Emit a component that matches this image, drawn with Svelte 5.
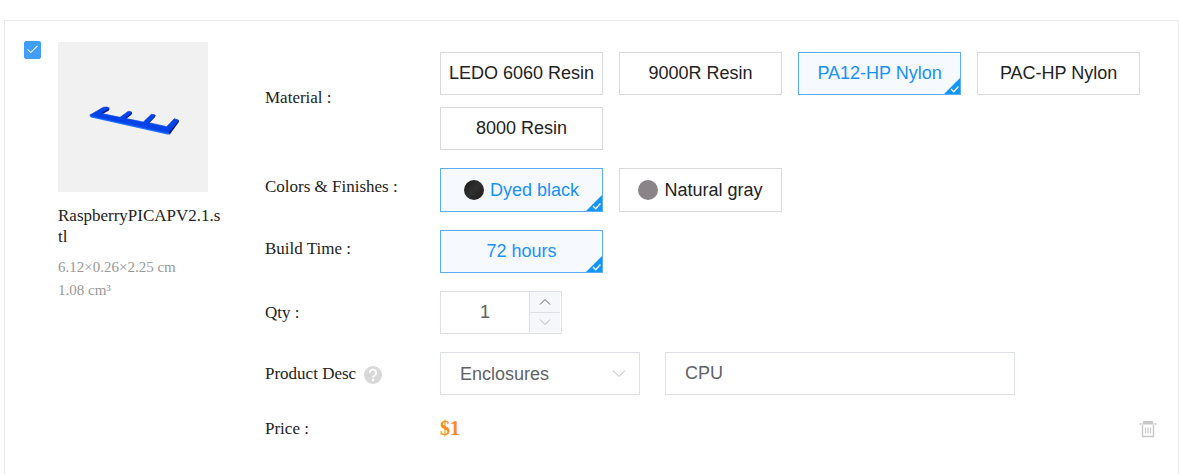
<script>
  const materials = [
    "LEDO 6060 Resin",
    "9000R Resin",
    "PA12-HP Nylon",
    "PAC-HP Nylon",
    "8000 Resin"
  ];
  const finishes = [
    { name: "Dyed black", swatch: "black" },
    { name: "Natural gray", swatch: "gray" }
  ];
  const buildTimes = ["72 hours"];
  const categories = ["Enclosures", "Prototypes", "Tools", "Other"];

  let selected = true;
  let material = "PA12-HP Nylon";
  let finish = "Dyed black";
  let buildTime = "72 hours";
  let qty = 1;
  let category = "Enclosures";
  let description = "CPU";

  function changeQty(step) {
    qty = Math.max(1, Number(qty) + step);
  }
</script>

<style>
  :global(body) {
    background: #fff;
  }

  .card {
    display: flex;
    align-items: flex-start;
    box-sizing: border-box;
    min-height: calc(100vh - 20px);
    margin: 20px 0 0 4px;
    padding: 20px 21px 24px 19px;
    border: 1px solid #ebebeb;
    border-bottom: 0;
    color: #222;
    font-family: "Liberation Serif", "Times New Roman", serif;
    font-size: 18px;
    line-height: 21px;
  }

  .pick {
    appearance: none;
    flex: none;
    display: grid;
    place-items: center;
    width: 17px;
    height: 18px;
    margin: 0;
    border: 1px solid #409eff;
    border-radius: 2px;
  }

  .pick:checked {
    background: #409eff;
  }

  .pick:checked::after {
    content: "";
    width: 4px;
    height: 9px;
    margin-top: -4px;
    border: solid #fff;
    border-width: 0 1px 1px 0;
    transform: rotate(45deg);
  }

  .part {
    flex: none;
    width: 165px;
    margin: 1px 42px 0 17px;
  }

  .thumb {
    display: block;
    width: 150px;
    height: 150px;
    margin-bottom: 13px;
    background: #f1f1f1;
  }

  .name {
    margin: 0 0 9px;
    font-size: 17px;
    word-break: break-all;
  }

  .size {
    margin: 0;
    color: #999;
    font-size: 15px;
    line-height: 23px;
  }

  .options {
    flex: 1;
    display: grid;
    gap: 18px;
    min-width: 0;
    padding-top: 11px;
  }

  .row {
    display: flex;
    align-items: center;
  }

  .label {
    flex: none;
    display: flex;
    align-items: center;
    width: 175px;
    font-size: 17px;
  }

  .choices .label {
    padding-bottom: 7px;
  }

  .values {
    flex: 1;
    display: flex;
    flex-wrap: wrap;
    gap: 12px 16px;
  }

  button,
  input,
  select {
    font-family: "Liberation Sans", Arial, sans-serif;
    font-size: 18px;
  }

  button {
    cursor: pointer;
  }

  .choice {
    position: relative;
    display: flex;
    justify-content: center;
    align-items: center;
    gap: 6px;
    min-width: 163px;
    height: 43px;
    padding: 0 8px;
    border: 1px solid #d9d9d9;
    background: #fff;
    color: #222;
  }

  .choice.finish {
    height: 44px;
  }

  .choice.active {
    border-color: #5babfb;
    background: #f6faff;
    color: #1890ff;
  }

  .corner {
    position: absolute;
    right: 0;
    bottom: 0;
    width: 16px;
    height: 16px;
  }

  .swatch {
    width: 20px;
    height: 20px;
    border-radius: 50%;
  }

  .black {
    background: linear-gradient(135deg, #191919, #303030 50%, #1c1c1c);
  }

  .gray {
    background: #8a8488;
  }

  .number,
  .select,
  .text {
    box-sizing: border-box;
    height: 43px;
    border: 1px solid #dcdfe6;
    background: #fff;
    color: #606266;
  }

  .number {
    display: flex;
    width: 122px;
  }

  .number input {
    flex: 1;
    min-width: 0;
    padding: 0;
    border: 0;
    background: none;
    color: inherit;
    text-align: center;
    outline: none;
  }

  .steps {
    display: flex;
    flex-direction: column;
    width: 30px;
    margin: 0 1px 1px 0;
    border-left: 1px solid #dcdfe6;
  }

  .steps button {
    flex: 1;
    display: grid;
    place-items: center;
    padding: 0;
    border: 0;
    background: #f5f7fa;
    color: #606266;
  }

  .steps button + button {
    border-top: 1px solid #dcdfe6;
  }

  .steps button:disabled {
    color: #b4b8c0;
    cursor: not-allowed;
  }

  .desc .values {
    gap: 12px 25px;
  }

  .select {
    display: grid;
    align-items: center;
    width: 200px;
  }

  .select select {
    grid-area: 1 / 1;
    appearance: none;
    height: 100%;
    padding: 0 40px 0 19px;
    border: 0;
    background: none;
    color: inherit;
    outline: none;
  }

  .select svg {
    grid-area: 1 / 1;
    justify-self: end;
    margin-right: 13px;
    color: #b4b8c0;
    pointer-events: none;
  }

  .text {
    flex: 0 1 350px;
    min-width: 0;
    padding: 0 19px;
    outline: none;
  }

  .help {
    margin: 3px 0 0 8px;
  }

  .price {
    flex: 1;
    color: #ff8a1e;
    font-size: 20px;
    font-weight: bold;
  }

  .total {
    padding-top: 5px;
  }

  .remove {
    display: block;
    padding: 0;
    border: 0;
    background: none;
  }

  .remove svg {
    display: block;
  }
</style>

{#snippet corner()}
  <svg class="corner" viewBox="0 0 16 16" aria-hidden="true">
    <path d="M16 0V16H0Z" fill="#1296fb" />
    <path d="M7 11l2.8 2.8 4.6-5.3" fill="none" stroke="#fff" stroke-width="1.3" />
  </svg>
{/snippet}

<div class="card">
  <input class="pick" type="checkbox" aria-label="Select part" bind:checked={selected} />

  <div class="part">
    <svg class="thumb" viewBox="0 0 450 450" aria-hidden="true">
      <g transform="translate(-174 -126)" fill="none" stroke-linecap="round" stroke-linejoin="round">
        <path
          d="M290 346L323 328M370 357L391 340M440 370L461 348M507 398L532 364"
          stroke="#06187f"
          stroke-width="10" />
        <path d="M275 348L503 399" stroke="#1670ff" stroke-width="9" />
        <path
          d="M270 345L310 322L320 321L328 324L302 340L360 352L385 334L396 337L375 355L430 366L454 343L466 346L446 368L500 380L523 356L536 361L506 397L498 397L272 347Z"
          fill="#0443e8"
          stroke="#0443e8"
          stroke-width="2" />
      </g>
    </svg>
    <p class="name">RaspberryPICAPV2.1.stl</p>
    <p class="size">6.12×0.26×2.25 cm</p>
    <p class="size">1.08 cm³</p>
  </div>

  <div class="options">
    <div class="row choices" role="group" aria-labelledby="material">
      <span class="label" id="material">Material :</span>
      <div class="values">
        {#each materials as item}
          <button
            class="choice"
            class:active={item === material}
            aria-pressed={item === material}
            on:click={() => (material = item)}>
            {item}
            {#if item === material}{@render corner()}{/if}
          </button>
        {/each}
      </div>
    </div>

    <div class="row choices" role="group" aria-labelledby="finish">
      <span class="label" id="finish">Colors &amp; Finishes :</span>
      <div class="values">
        {#each finishes as item}
          <button
            class="choice finish"
            class:active={item.name === finish}
            aria-pressed={item.name === finish}
            on:click={() => (finish = item.name)}>
            <span class="swatch {item.swatch}"></span>
            {item.name}
            {#if item.name === finish}{@render corner()}{/if}
          </button>
        {/each}
      </div>
    </div>

    <div class="row choices" role="group" aria-labelledby="build-time">
      <span class="label" id="build-time">Build Time :</span>
      <div class="values">
        {#each buildTimes as item}
          <button
            class="choice"
            class:active={item === buildTime}
            aria-pressed={item === buildTime}
            on:click={() => (buildTime = item)}>
            {item}
            {#if item === buildTime}{@render corner()}{/if}
          </button>
        {/each}
      </div>
    </div>

    <div class="row">
      <label class="label" for="qty">Qty :</label>
      <div class="number">
        <input id="qty" type="text" inputmode="numeric" bind:value={qty} />
        <div class="steps">
          <button aria-label="Increase" on:click={() => changeQty(1)}>
            <svg width="12" height="8" viewBox="0 0 12 8" fill="none" stroke="currentColor">
              <path d="M1 6.5l5-5 5 5" />
            </svg>
          </button>
          <button aria-label="Decrease" disabled={qty <= 1} on:click={() => changeQty(-1)}>
            <svg width="12" height="8" viewBox="0 0 12 8" fill="none" stroke="currentColor">
              <path d="M1 1.5l5 5 5-5" />
            </svg>
          </button>
        </div>
      </div>
    </div>

    <div class="row desc">
      <label class="label" for="category">
        Product Desc
        <svg class="help" width="18" height="18" viewBox="0 0 18 18" aria-hidden="true">
          <circle cx="9" cy="9" r="9" fill="#d8d8d8" />
          <path
            d="M5.8 7a3.2 3.2 0 1 1 5.2 2.2C9.8 10 9 10.3 9 11.6"
            fill="none"
            stroke="#fff"
            stroke-width="1.9" />
          <circle cx="9" cy="14" r="1.3" fill="#fff" />
        </svg>
      </label>
      <div class="values">
        <div class="select">
          <select id="category" bind:value={category}>
            {#each categories as item}
              <option>{item}</option>
            {/each}
          </select>
          <svg width="14" height="9" viewBox="0 0 14 9" fill="none" stroke="currentColor">
            <path d="M1 1.5l6 6 6-6" />
          </svg>
        </div>
        <input class="text" type="text" aria-label="Description" bind:value={description} />
      </div>
    </div>

    <div class="row total">
      <span class="label">Price :</span>
      <span class="price">$1</span>
      <button class="remove" aria-label="Remove part">
        <svg width="18" height="18" viewBox="0 0 18 18" fill="none" stroke="#c8c8c8">
          <path d="M4 1h10v3H4z" fill="#c8c8c8" stroke="none" />
          <path d="M0 4h18" />
          <path d="M3.5 5v11.5h11V5" stroke-width="1.4" />
          <path d="M6.5 7.5v6M9 7.5v6M11.5 7.5v6" stroke-width="1.2" />
        </svg>
      </button>
    </div>
  </div>
</div>
